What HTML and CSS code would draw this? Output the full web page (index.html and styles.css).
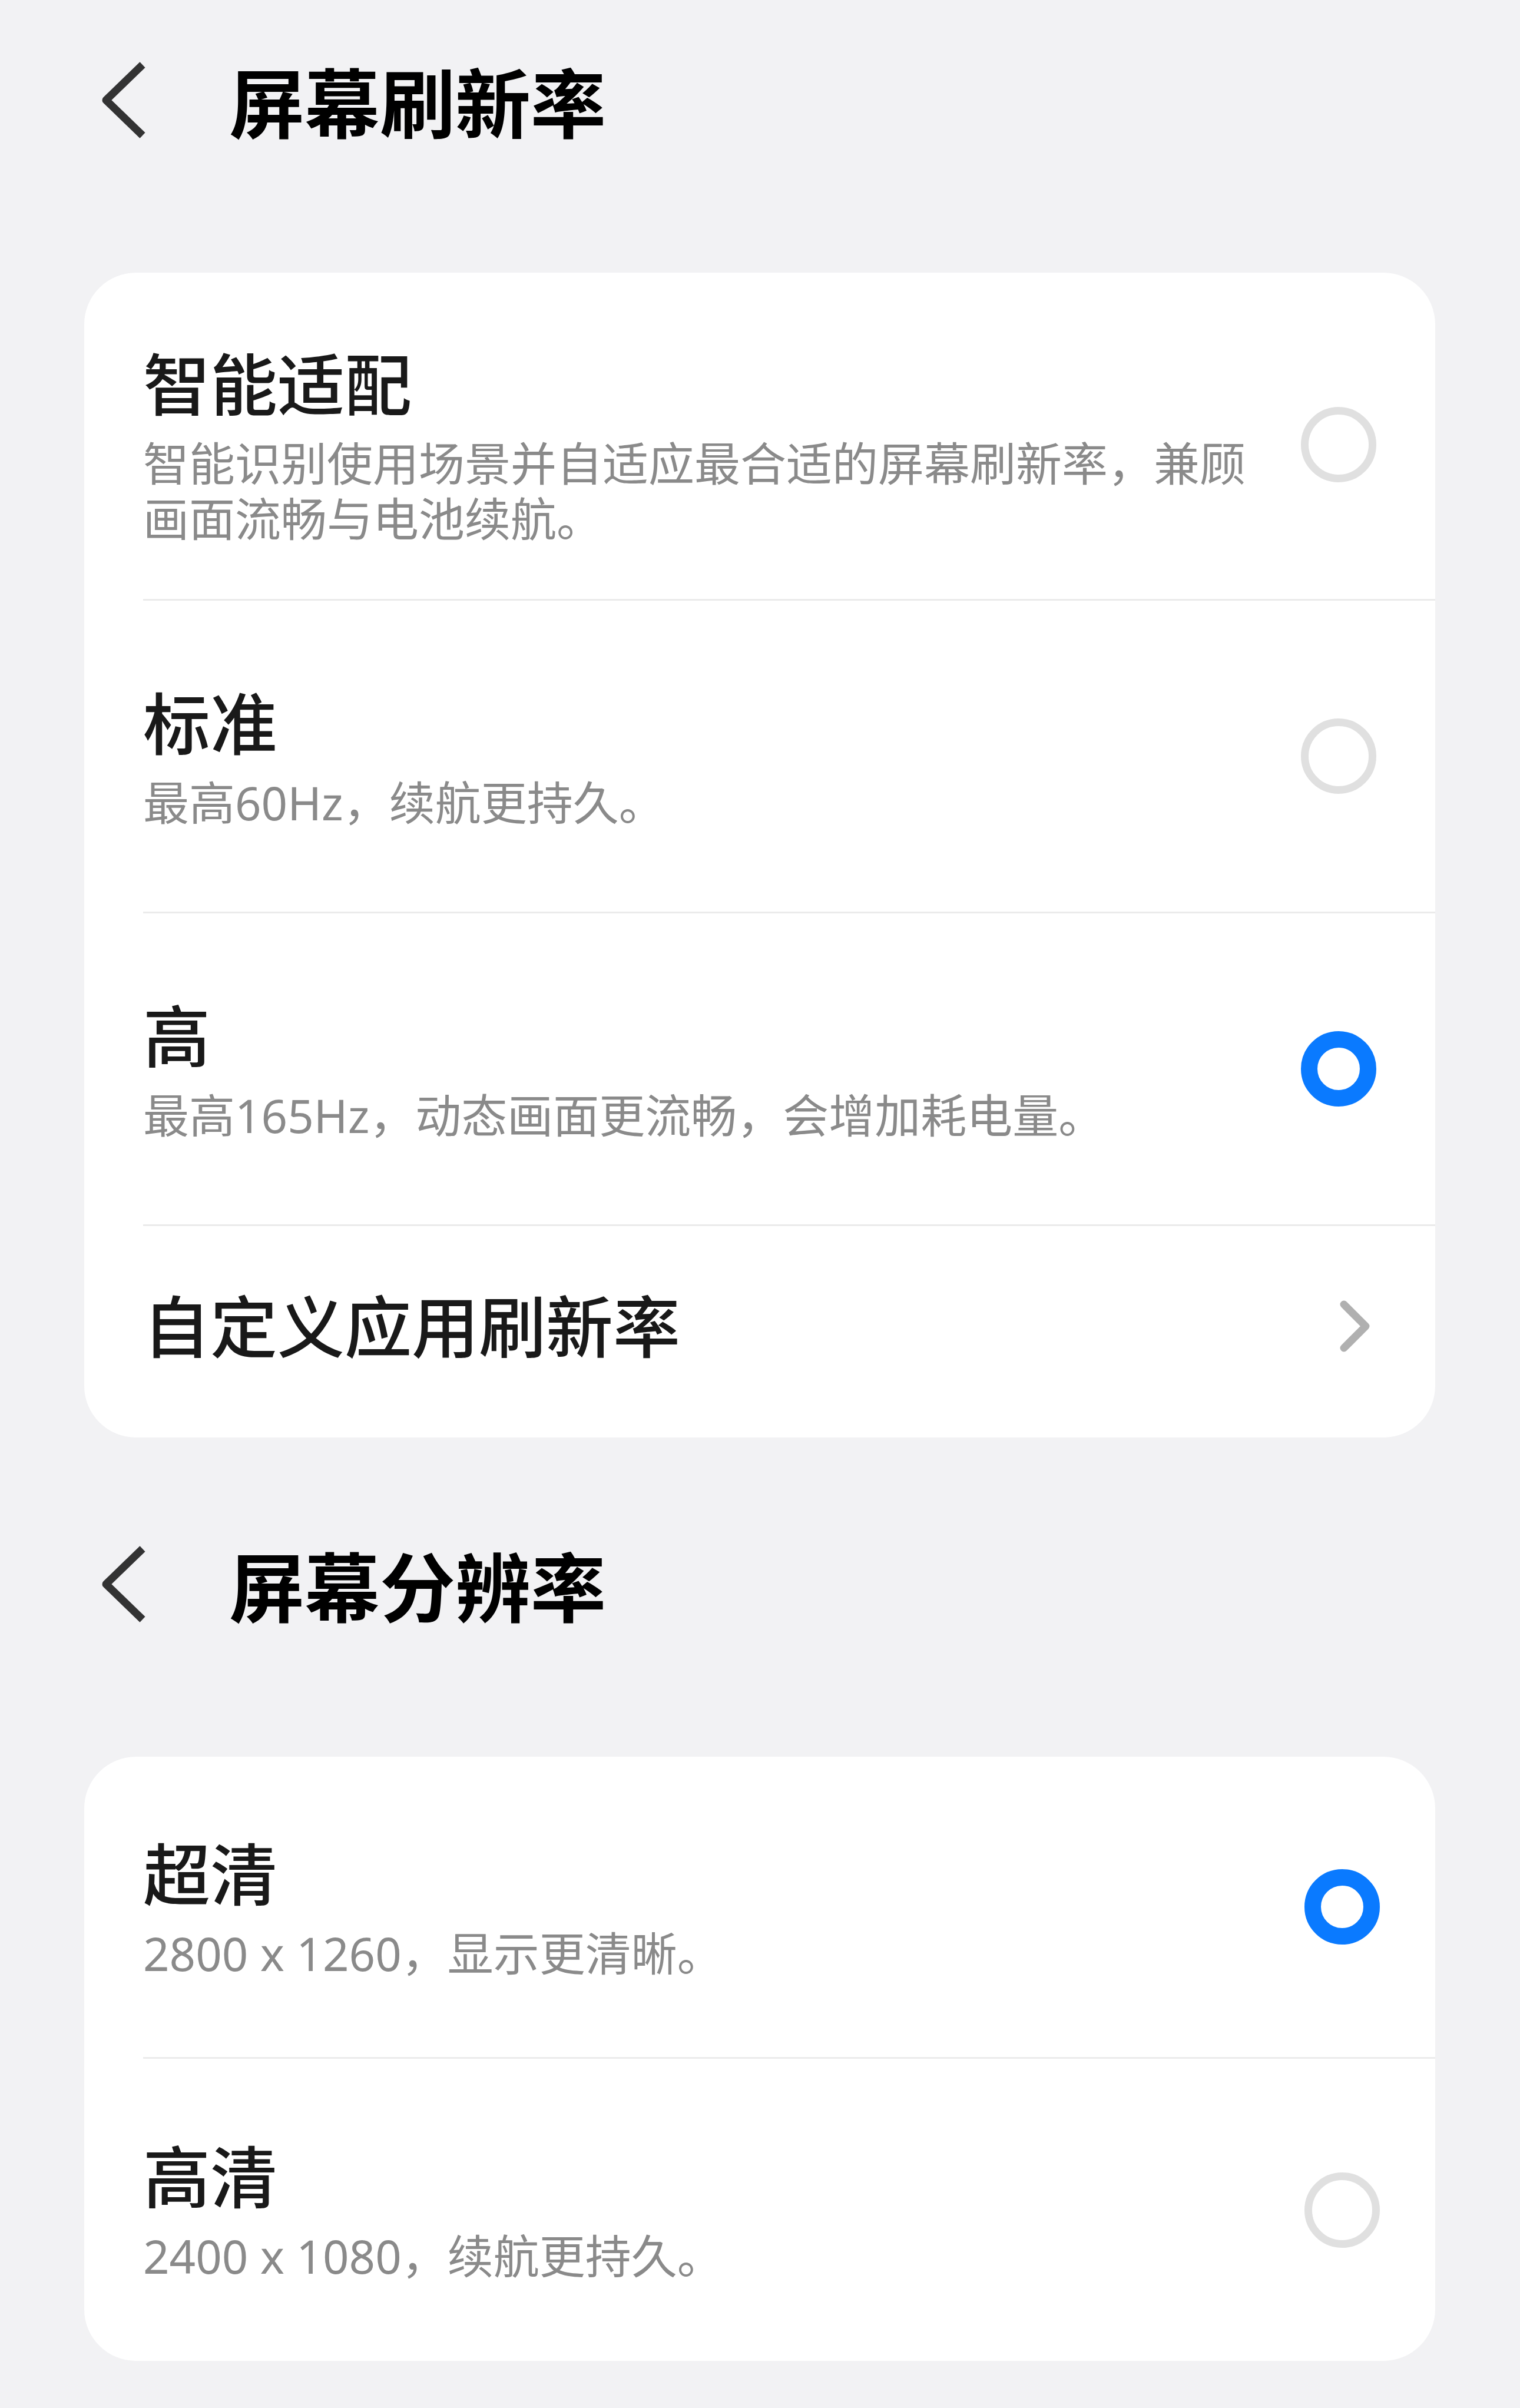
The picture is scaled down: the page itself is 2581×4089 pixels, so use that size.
FILE: index.html
```html
<!DOCTYPE html>
<html lang="zh-CN">
<head>
  <meta charset="UTF-8" />
  <title>屏幕刷新率</title>
  <link rel="stylesheet" href="styles.css">
</head>
<body>

  <section class="section">
    <header class="header">
      <svg class="back" viewBox="0 0 80 130" width="80" height="130">
        <path d="M72 5 L10 65 L72 125" />
      </svg>
      <h1>屏幕刷新率</h1>
    </header>

    <div class="card">
      <div class="row row-lead">
        <div class="row-text">
          <div class="row-title">智能适配</div>
          <div class="row-desc">智能识别使用场景并自适应最合适的屏幕刷新率，兼顾画面流畅与电池续航。</div>
        </div>
        <span class="radio"></span>
      </div>
      <div class="row">
        <div class="row-text">
          <div class="row-title">标准</div>
          <div class="row-desc">最高60Hz，续航更持久。</div>
        </div>
        <span class="radio"></span>
      </div>
      <div class="row">
        <div class="row-text">
          <div class="row-title">高</div>
          <div class="row-desc">最高165Hz，动态画面更流畅，会增加耗电量。</div>
        </div>
        <span class="radio checked"></span>
      </div>
      <div class="row row-link">
        <div class="row-text">
          <div class="row-title">自定义应用刷新率</div>
        </div>
        <svg class="more" viewBox="0 0 52 88" width="52" height="88">
          <path d="M7 7 L44 44 L7 81" />
        </svg>
      </div>
    </div>
  </section>

  <section class="section">
    <header class="header">
      <svg class="back" viewBox="0 0 80 130" width="80" height="130">
        <path d="M72 5 L10 65 L72 125" />
      </svg>
      <h1>屏幕分辨率</h1>
    </header>

    <div class="card card-res">
      <div class="row">
        <div class="row-text">
          <div class="row-title">超清</div>
          <div class="row-desc">2800 x 1260，显示更清晰。</div>
        </div>
        <span class="radio checked"></span>
      </div>
      <div class="row">
        <div class="row-text">
          <div class="row-title">高清</div>
          <div class="row-desc">2400 x 1080，续航更持久。</div>
        </div>
        <span class="radio"></span>
      </div>
    </div>
  </section>

</body>
</html>
```

FILE: styles.css
```css
body {
  font-family: "Noto Sans", "Noto Sans CJK SC", sans-serif;
  background: #f2f2f4;
  color: #191919;
  margin: 0;
  padding: 55px 0 0;
  min-height: 4089px;
  box-sizing: border-box;
}

.section {
  margin-bottom: 134px;
}

.header {
  display: flex;
  align-items: center;
  height: 230px;
  padding-left: 170px;
  gap: 139px;
  margin-bottom: 178px;
}

.back path {
  fill: none;
  stroke: #333;
  stroke-width: 13;
  stroke-linejoin: round;
}

h1 {
  margin: 0;
  font-family: "Noto Sans CJK SC", sans-serif;
  font-size: 128px;
  font-weight: 700;
  line-height: 1;
  color: #000;
}

.card {
  margin: 0 144px 0 143px;
  background: #fff;
  border-radius: 88px;
  overflow: hidden;
}

.row {
  display: flex;
  align-items: center;
  gap: 60px;
  min-height: 531px;
  box-sizing: border-box;
  margin-left: 100px;
  padding-right: 100px;
  border-bottom: 3px solid #ebebeb;
}

.row:last-child {
  border-bottom: none;
}

.row-lead {
  min-height: 557px;
  padding-top: 30px;
}

.row-link {
  min-height: 359px;
  padding-bottom: 20px;
}

.card-res .row {
  min-height: 513px;
  padding-right: 94px;
}

.row-text {
  flex: 1;
  margin-bottom: 10px;
}

.row-title {
  font-family: "Noto Sans CJK SC", sans-serif;
  font-size: 114px;
  font-weight: 500;
  line-height: 147px;
}

.row-desc {
  margin-top: 20px;
  font-size: 78px;
  line-height: 94px;
  color: #8a8a8a;
}

.radio {
  flex: none;
  width: 128px;
  height: 128px;
  box-sizing: border-box;
  border: 13px solid #e0e0e0;
  border-radius: 50%;
}

.radio.checked {
  border: 28px solid #0a7aff;
}

.more {
  flex: none;
  margin-right: 10px;
}

.more path {
  fill: none;
  stroke: #b0b0b0;
  stroke-width: 13;
  stroke-linecap: round;
  stroke-linejoin: round;
}
```
